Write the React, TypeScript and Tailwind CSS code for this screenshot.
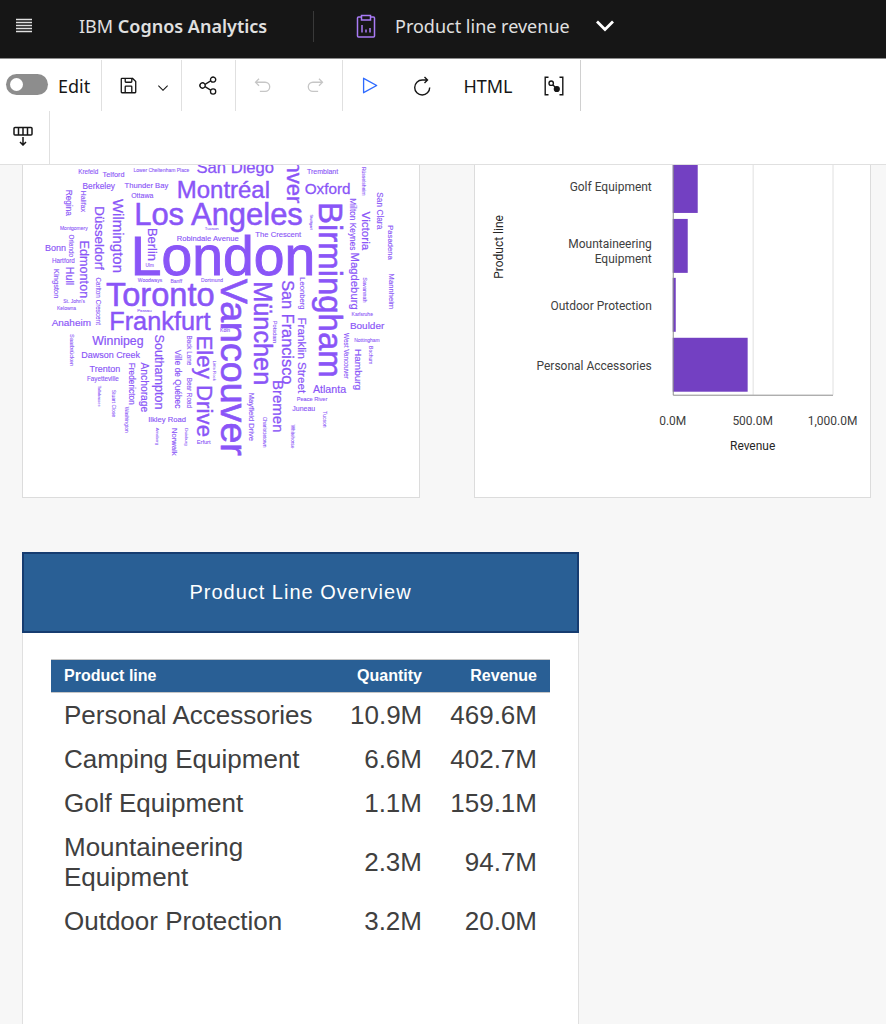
import type { ReactNode } from "react";

type Word = [text: string, x: number, y: number, size: number];

// The cloud is drawn on its own grid, three units to a pixel.
const flatWords: Word[] = [
  ["Krefeld", 163, 28, 19],
  ["Telford", 236, 37, 22],
  ["Lower Cheltenham Place", 329, 20, 15],
  ["San Diego", 518, 25, 50],
  ["Berkeley", 176, 72, 25],
  ["Thunder Bay", 302, 70, 23],
  ["Ottawa", 322, 98, 21],
  ["Montréal", 459, 98, 72],
  ["Los Angeles", 331, 180, 93],
  ["Montgomery", 108, 195, 15],
  ["Tucson", 543, 194, 13],
  ["Robindale Avenue", 459, 227, 23],
  ["The Crescent", 695, 216, 23],
  ["Tremblant", 850, 28, 21],
  ["Oxford", 843, 87, 46],
  ["London", 321, 330, 166],
  ["Bonn", 63, 259, 27],
  ["Hartford", 84, 293, 19],
  ["Ulm", 365, 306, 14],
  ["Woodways", 342, 350, 15],
  ["Banff", 440, 355, 15],
  ["Dortmund", 532, 352, 15],
  ["Toronto", 246, 425, 98],
  ["St. John's", 118, 416, 15],
  ["Kelowna", 99, 436, 15],
  ["Passau", 340, 442, 13],
  ["Frankfurt", 256, 497, 76],
  ["Anaheim", 83, 484, 30],
  ["Winnipeg", 205, 540, 37],
  ["Dawson Creek", 172, 579, 27],
  ["Trenton", 197, 622, 27],
  ["Fayetteville", 189, 650, 19],
  ["Ilkley Road", 373, 772, 23],
  ["Erfurt", 519, 838, 17],
  ["Köln", 589, 503, 15],
  ["Karlsruhe", 984, 454, 15],
  ["Boulder", 979, 492, 30],
  ["Nottingham", 992, 531, 15],
  ["Atlanta", 868, 684, 32],
  ["Peace River", 819, 708, 17],
  ["Juneau", 806, 738, 21],
];

const turnedWords: Word[] = [
  ["Regina", 126, 74, 25],
  ["Halifax", 170, 77, 21],
  ["Wilmington", 268, 102, 45],
  ["Düsseldorf", 212, 124, 40],
  ["Orlando", 136, 209, 19],
  ["Edmonton", 168, 227, 38],
  ["Berlin", 371, 189, 39],
  ["Kingston", 91, 312, 23],
  ["Hull", 126, 306, 32],
  ["Carlton Crescent", 217, 338, 19],
  ["Denver", 791, -98, 66],
  ["Birmingham", 886, 111, 99],
  ["Stuttgart", 859, 149, 12],
  ["Rüsselsheim", 1015, 6, 15],
  ["San Clara", 1061, 82, 25],
  ["Milton Keynes", 980, 100, 25],
  ["Victoria", 1016, 140, 35],
  ["Pasadena", 1093, 181, 23],
  ["Magdeburg", 981, 263, 34],
  ["Savannah", 1019, 337, 17],
  ["Mannheim", 1096, 326, 23],
  ["Leonberg", 829, 337, 23],
  ["Vancouver", 593, 342, 113],
  ["München", 690, 349, 76],
  ["San Francisco", 776, 346, 49],
  ["Potsdam", 747, 468, 17],
  ["Franklin Street", 823, 458, 35],
  ["West Vancouver", 960, 505, 19],
  ["Bochum", 1037, 544, 15],
  ["Hamburg", 993, 553, 30],
  ["Bremen", 749, 646, 45],
  ["Mayfield Drive", 677, 684, 23],
  ["Charlottetown", 719, 756, 15],
  ["Whitehorse", 803, 780, 14],
  ["Tucson", 897, 740, 15],
  ["Saarbrücken", 139, 508, 17],
  ["Fredericton", 316, 594, 25],
  ["Anchorage", 351, 593, 31],
  ["Southampton", 393, 509, 38],
  ["Ville de Québec", 455, 555, 25],
  ["Back Lane", 489, 512, 19],
  ["Bear Road", 489, 639, 19],
  ["Eley Drive", 520, 512, 67],
  ["Little Rock", 569, 588, 13],
  ["Tallahassee", 223, 663, 12],
  ["Stuart Close", 263, 675, 15],
  ["Washington", 302, 726, 15],
  ["Arnsberg", 396, 789, 13],
  ["Norwalk", 445, 790, 23],
  ["Duisburg", 485, 791, 13],
];

const bars = [
  { label: ["Golf Equipment"], top: -6, width: 25 },
  { label: ["Mountaineering", "Equipment"], top: 54, width: 15 },
  { label: ["Outdoor Protection"], top: 113, width: 3 },
  { label: ["Personal Accessories"], top: 173, width: 75 },
];

const rows = [
  ["Personal Accessories", "10.9M", "469.6M"],
  ["Camping Equipment", "6.6M", "402.7M"],
  ["Golf Equipment", "1.1M", "159.1M"],
  ["Mountaineering Equipment", "2.3M", "94.7M"],
  ["Outdoor Protection", "3.2M", "20.0M"],
];

function Glyph({ d, className = "size-[21px]" }: { d: string; className?: string }) {
  return (
    <svg viewBox="0 0 32 32" fill="currentColor" className={className} aria-hidden="true">
      <path d={d} />
    </svg>
  );
}

function ToolButton({
  label,
  className = "w-[53px]",
  disabled,
  children,
}: {
  label: string;
  className?: string;
  disabled?: boolean;
  children: ReactNode;
}) {
  return (
    <button
      type="button"
      aria-label={label}
      disabled={disabled}
      className={`flex h-full items-center justify-center disabled:text-[#c6c6c6] ${className}`}
    >
      {children}
    </button>
  );
}

function TopBar() {
  return (
    <header className="flex h-[59px] items-center border-b border-[#8d8d8d] bg-[#161616] pb-[6px] text-lg text-[#e0e0e0]">
      <button type="button" aria-label="Open menu" className="flex w-12 justify-center">
        <svg viewBox="0 0 16 16" className="size-4" stroke="currentColor" strokeWidth="1.3" aria-hidden="true">
          <path d="M0 1.5h16M0 4.5h16M0 7.5h16M0 10.5h16M0 13.5h16" />
        </svg>
      </button>
      <div className="ml-[31px] w-[234px]">
        IBM <span className="font-semibold">Cognos Analytics</span>
      </div>
      <div className="h-[31px] w-px bg-[#393939]" />
      <svg viewBox="0 0 20 24" className="ml-[42px] h-6 w-5" fill="none" stroke="#a97bf5" strokeWidth="1.5" aria-hidden="true">
        <path d="M5.5 3h-3a1 1 0 0 0-1 1v18a1 1 0 0 0 1 1h15a1 1 0 0 0 1-1V4a1 1 0 0 0-1-1h-3" />
        <path d="M5.5 1.500h9V6h-9zM6 11v7.500M10 15.500v3M14 14v4.500" />
      </svg>
      <button type="button" className="ml-[19px] flex items-center">
        Product line revenue
        <svg viewBox="0 0 18 12" className="ml-[26px] h-3 w-[18px]" fill="none" stroke="white" strokeWidth="2.8" aria-hidden="true">
          <path d="M1 1.500l8 8 8-8" />
        </svg>
      </button>
    </header>
  );
}

function Toolbar() {
  return (
    <div className="border-b border-[#e0e0e0] bg-white text-lg text-[#161616]">
      <div className="flex h-[52px] pt-px">
        <label className="flex w-[102px] items-center border-r border-[#e0e0e0] pl-[6px]">
          <input
            type="checkbox"
            role="switch"
            className="mb-[2px] h-[21px] w-[42px] appearance-none rounded-full bg-[#8d8d8d] p-1 before:block before:size-[13px] before:rounded-full before:bg-white checked:before:ml-auto"
          />
          <span className="ml-[10px]">Edit</span>
        </label>
        <div className="flex w-20 border-r border-[#e0e0e0]">
          <ToolButton label="Save">
            <Glyph d="M27.71 9.29l-5-5A1 1 0 0 0 22 4H6A2 2 0 0 0 4 6V26a2 2 0 0 0 2 2H26a2 2 0 0 0 2-2V10A1 1 0 0 0 27.71 9.29ZM12 6h8v4H12Zm8 20H12V18h8Zm2 0V18a2 2 0 0 0-2-2H12a2 2 0 0 0-2 2v8H6V6h4v4a2 2 0 0 0 2 2h8a2 2 0 0 0 2-2V6.41l4 4V26Z" />
          </ToolButton>
          <ToolButton label="Save options" className="w-4 pt-1">
            <Glyph className="size-4 shrink-0" d="M16 22L6 12l1.400-1.400 8.600 8.600 8.600-8.600L26 12z" />
          </ToolButton>
        </div>
        <div className="flex w-[54px] border-r border-[#e0e0e0]">
          <ToolButton label="Share">
            <Glyph d="M23 20a5 5 0 0 0-3.890 1.890L11.800 17.320a4.460 4.460 0 0 0 0-2.640l7.310-4.570A5 5 0 1 0 18 7a4.790 4.790 0 0 0 .2 1.320l-7.310 4.570a5 5 0 1 0 0 6.220l7.310 4.570A4.790 4.790 0 0 0 18 25a5 5 0 1 0 5-5ZM23 4a3 3 0 1 1-3 3A3 3 0 0 1 23 4ZM7 19a3 3 0 1 1 3-3A3 3 0 0 1 7 19Zm16 9a3 3 0 1 1 3-3A3 3 0 0 1 23 28Z" />
          </ToolButton>
        </div>
        <div className="flex w-[107px] border-r border-[#e0e0e0]">
          <ToolButton label="Undo" disabled>
            <Glyph d="M20 10H7.815l3.587-3.586L10 5 4 11l6 6 1.402-1.415L7.818 12H20a6 6 0 0 1 0 12H12v2h8a8 8 0 0 0 0-16Z" />
          </ToolButton>
          <ToolButton label="Redo" disabled>
            <Glyph d="M12 10H24.185L20.598 6.414 22 5l6 6-6 6-1.402-1.415L24.182 12H12a6 6 0 0 0 0 12h8v2H12a8 8 0 0 1 0-16Z" />
          </ToolButton>
        </div>
        <div className="flex w-[238px] border-r border-[#d0d0d0]">
          <ToolButton label="Run" className="w-[53px] text-[#2f6bff]">
            <Glyph d="M7 28a1 1 0 0 1-1-1V5a1 1 0 0 1 1.482-.876l20 11a1 1 0 0 1 0 1.752l-20 11A1 1 0 0 1 7 28ZM8 6.691V25.309L24.925 16Z" />
          </ToolButton>
          <ToolButton label="Refresh">
            <svg viewBox="0 0 20 20" className="size-5" fill="none" stroke="currentColor" strokeWidth="1.4" aria-hidden="true">
              <path d="M16.700 11.500A7.500 7.500 0 1 1 9.200 4h5M11.500 1l3 3-3 3" />
            </svg>
          </ToolButton>
          <button type="button" className="h-full w-[78px]">
            HTML
          </button>
          <ToolButton label="Filter interactivity">
            <svg viewBox="0 0 20 20" className="size-5" fill="none" stroke="currentColor" strokeWidth="1.4" aria-hidden="true">
              <path d="M4.500 1.200H1.200v17.600h3.300M15.500 1.200h3.300v17.600h-3.300M9 9l3 3" />
              <circle cx="7.200" cy="7.200" r="2.200" />
              <circle cx="12.800" cy="13" r="2.400" fill="currentColor" />
            </svg>
          </ToolButton>
        </div>
      </div>
      <div className="flex h-[53px]">
        <div className="w-[50px] border-r border-[#e0e0e0]">
          <ToolButton label="Page layout" className="w-[46px] pb-1">
            <svg viewBox="0 0 20 20" className="size-5" fill="none" stroke="currentColor" strokeWidth="1.5" aria-hidden="true">
              <rect x="1" y="1.500" width="18" height="7.500" rx="1" />
              <path d="M5.500 1.500V9M10 1.500V9M14.500 1.500V9M10 11v8M7 16l3 3 3-3" />
            </svg>
          </ToolButton>
        </div>
      </div>
    </div>
  );
}

function WordCloud() {
  return (
    <svg
      viewBox="-3 0 1188 996"
      className="block w-full fill-[#8a55f7] stroke-[#8a55f7] font-['Liberation_Sans',Arial,sans-serif]"
    >
      {flatWords.map(([text, x, y, size]) => (
        <text key={text} x={x} y={y} fontSize={size} strokeWidth={size / 60}>
          {text}
        </text>
      ))}
      {turnedWords.map(([text, x, y, size]) => (
        <text key={text} transform={`translate(${x} ${y}) rotate(90)`} fontSize={size} strokeWidth={size / 60}>
          {text}
        </text>
      ))}
    </svg>
  );
}

function RevenueChart() {
  return (
    <svg viewBox="0 0 396 332" className="block w-full fill-[#404040] text-xs">
      <path d="M278.500 0v230M358.500 0v230" stroke="#e0e0e0" />
      {bars.map((bar) => (
        <g key={bar.label[0]}>
          <rect x="198" y={bar.top} width={bar.width} height="54" fill="#7340c2" />
          {bar.label.map((line, i) => (
            <text key={line} x="177" y={bar.top + (bar.label.length > 1 ? 29 : 32) + i * 15} textAnchor="end">
              {line}
            </text>
          ))}
        </g>
      ))}
      <path d="M198.500 0v230.500h160" fill="none" stroke="#8d8d8d" />
      <text x="198" y="260" textAnchor="middle">0.0M</text>
      <text x="278" y="260" textAnchor="middle">500.0M</text>
      <text x="358" y="260" textAnchor="middle">1,000.0M</text>
      <text x="278" y="285" textAnchor="middle" fill="#262626">Revenue</text>
      <text transform="translate(28 82) rotate(-90)" textAnchor="middle" fill="#262626">
        Product line
      </text>
    </svg>
  );
}

function Overview() {
  return (
    <section className="flex w-full max-w-[557px] grow flex-col font-['Liberation_Sans',Arial,sans-serif]">
      <h2 className="flex h-[81px] items-center justify-center border-2 border-[#163c70] bg-[#295f95] text-xl tracking-wider text-white">
        Product Line Overview
      </h2>
      <div className="grow border-x border-[#e0e0e0] bg-white px-7 pt-[26px]">
        <table className="w-full table-fixed text-[26px] text-[#404040]">
          <thead>
            <tr className="h-[33px] border-y border-[#c6c6c6] bg-[#295f95] text-base text-white">
              <th scope="col" className="px-[13px] text-left">Product line</th>
              <th scope="col" className="w-[98px] px-[13px] text-right">Quantity</th>
              <th scope="col" className="w-[115px] px-[13px] text-right">Revenue</th>
            </tr>
          </thead>
          <tbody>
            {rows.map(([name, quantity, revenue]) => (
              <tr key={name} className="leading-[30px]">
                <td className="px-[13px] py-[7px]">{name}</td>
                <td className="px-[13px] py-[7px] text-right">{quantity}</td>
                <td className="px-[13px] py-[7px] text-right">{revenue}</td>
              </tr>
            ))}
          </tbody>
        </table>
      </div>
    </section>
  );
}

export default function App() {
  return (
    <div className="flex min-h-screen flex-col bg-[#f7f7f7] font-['Noto_Sans',sans-serif]">
      <TopBar />
      <Toolbar />
      <main className="flex grow flex-col pr-[15px] pl-[22px]">
        <div className="mb-[54px] grid grid-cols-2 gap-[54px]">
          <div className="overflow-hidden border border-t-0 border-[#dcdcdc] bg-white">
            <WordCloud />
          </div>
          <div className="overflow-hidden border border-t-0 border-[#dcdcdc] bg-white font-[Roboto,sans-serif]">
            <RevenueChart />
          </div>
        </div>
        <Overview />
      </main>
    </div>
  );
}
